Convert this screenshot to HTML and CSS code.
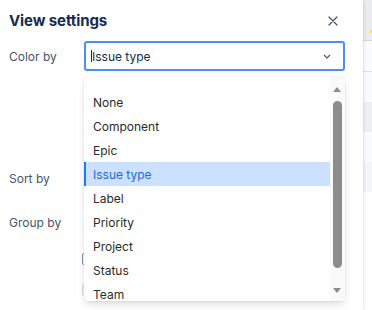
FILE: index.html
```html
<!DOCTYPE html>
<html lang="en">
<head>
    <meta charset="UTF-8">
    <meta name="viewport" content="width=device-width, initial-scale=1.0">
    <title>View settings</title>
    <link rel="stylesheet" href="styles.css">
</head>
<body>
    <div class="panel">
        <div class="header">
            <div class="title">View settings</div>
            <button class="close" aria-label="Close">
                <svg width="10" height="10" viewBox="0 0 10 10">
                    <path d="M1 1 L9 9 M9 1 L1 9" stroke="#44546f" stroke-width="1.3" fill="none" stroke-linecap="round"/>
                </svg>
            </button>
        </div>

        <div class="row">
            <div class="label">Color by</div>
            <div class="select focused">
                <span class="caret"></span>
                <span class="value">Issue type</span>
                <svg class="chevron" width="8" height="5" viewBox="0 0 8 5">
                    <path d="M1 1 L4 4 L7 1" stroke="#44546f" stroke-width="1.1" fill="none"/>
                </svg>
            </div>
        </div>

        <div class="row sort">
            <div class="label">Sort by</div>
            <div class="select"></div>
        </div>

        <div class="row group">
            <div class="label">Group by</div>
            <div class="select"></div>
        </div>

        <div class="checks">
            <div class="check-row">
                <span class="checkbox"></span>
            </div>
            <div class="check-row muted">
                <span class="checkbox"></span>
            </div>
            <div class="check-row faint">
                <span class="checkbox"></span>
                <span class="check-text">Show sub-tasks on cards</span>
            </div>
        </div>

        <div class="menu">
            <ul class="options">
                <li>None</li>
                <li>Component</li>
                <li>Epic</li>
                <li class="selected">Issue type</li>
                <li>Label</li>
                <li>Priority</li>
                <li>Project</li>
                <li>Status</li>
                <li>Team</li>
            </ul>
            <div class="scrollbar">
                <span class="arrow up"></span>
                <span class="thumb"></span>
                <span class="arrow down"></span>
            </div>
        </div>
    </div>

    <div class="page">
        <div class="page-head"><span class="dot"></span></div>
        <div class="page-row line"></div>
        <div class="page-row"></div>
        <div class="page-row grey"></div>
        <div class="page-row"></div>
        <div class="page-row light"></div>
    </div>
</body>
</html>
```

FILE: styles.css
```css
body {
    font-family: Inter, 'Noto Sans', sans-serif;
    margin: 0;
    padding: 0;
    display: flex;
    height: 310px;
    overflow: hidden;
    background: #fff;
    color: #292a2e;
}

.panel {
    position: relative;
    width: 363px;
    height: 310px;
    overflow: hidden;
    flex-shrink: 0;
    background: #fff;
    box-shadow: 1px 0 3px rgba(9, 30, 66, 0.12);
    z-index: 1;
}

.header {
    height: 41px;
    display: flex;
    align-items: center;
    justify-content: space-between;
    padding: 0 25px 0 9px;
    box-sizing: border-box;
}

.title {
    font-size: 15px;
    font-weight: 700;
    color: #172b4d;
    letter-spacing: -0.1px;
}

.close {
    background: none;
    border: none;
    padding: 0;
    width: 10px;
    height: 10px;
    display: flex;
    cursor: pointer;
}

.row {
    display: flex;
    align-items: center;
    height: 30px;
    padding-left: 9px;
}

.row.sort {
    margin-top: 92px;
}

.row.group {
    margin-top: 14px;
}

.label {
    width: 75px;
    font-size: 12px;
    color: #44546f;
}

.select {
    width: 261px;
    height: 30px;
    box-sizing: border-box;
    border: 1px solid #dcdfe4;
    border-radius: 3px;
    display: flex;
    align-items: center;
    padding: 0 12px 0 7px;
    font-size: 12px;
    color: #172b4d;
}

.select.focused {
    border: 2px solid #4b8ef5;
    padding-left: 5px;
}

.select .value {
    flex: 1;
}

.caret {
    width: 1px;
    height: 12px;
    background: #172b4d;
}

.checks {
    margin-top: 6px;
}

.check-row {
    display: flex;
    align-items: center;
    gap: 8px;
    height: 31px;
    padding-left: 82px;
    font-size: 12px;
    color: #44546f;
}

.checkbox {
    width: 10px;
    height: 10px;
    border: 1px solid #8590a2;
    border-radius: 2px;
}

.check-row.muted .checkbox {
    border-color: #dcdfe4;
    background: #f1f2f4;
}

.check-row.faint {
    color: #a5adba;
}

/* dropdown menu over the form */
.menu {
    position: absolute;
    top: 77px;
    left: 84px;
    width: 261px;
    height: 224px;
    background: #fff;
    border-radius: 4px;
    box-shadow: 0 4px 8px -2px rgba(9, 30, 66, 0.2), 0 0 1px rgba(9, 30, 66, 0.25);
    display: flex;
    overflow: hidden;
}

.options {
    list-style: none;
    margin: 0;
    padding: 13px 0 0 0;
    flex: 1;
}

.options li {
    height: 24px;
    line-height: 25px;
    padding-left: 9px;
    font-size: 12px;
    color: #292a2e;
}

.options li.selected {
    background: #cce0ff;
    color: #1d6ae5;
    border-left: 2px solid #1d7afc;
    padding-left: 7px;
}

.scrollbar {
    width: 15px;
    background: #fafafa;
    position: relative;
}

.thumb {
    position: absolute;
    left: 3px;
    top: 24px;
    width: 9px;
    height: 167px;
    background: #8c8c8c;
    border-radius: 5px;
}

.arrow {
    position: absolute;
    left: 3px;
    width: 0;
    height: 0;
    border-left: 4.5px solid transparent;
    border-right: 4.5px solid transparent;
}

.arrow.up {
    top: 10px;
    border-bottom: 5px solid #8c8c8c;
}

.arrow.down {
    top: 211px;
    border-top: 5px solid #8c8c8c;
}

/* board behind the drawer */
.page {
    flex: 1;
    display: flex;
    flex-direction: column;
}

.page-head {
    height: 41px;
    background: #ebecf0;
    border-bottom: 1px solid #d5d8dd;
    box-sizing: border-box;
    position: relative;
}

.dot {
    position: absolute;
    right: 0;
    top: 30px;
    width: 2px;
    height: 3px;
    background: #f5d77a;
}

.page-row {
    height: 30px;
    background: #fafbfc;
}

.page-row.line {
    border-bottom: 1px solid #dcdfe4;
}

.page-row.grey {
    background: #eeeff1;
}

.page-row.light {
    background: #f4f5f6;
}
```
